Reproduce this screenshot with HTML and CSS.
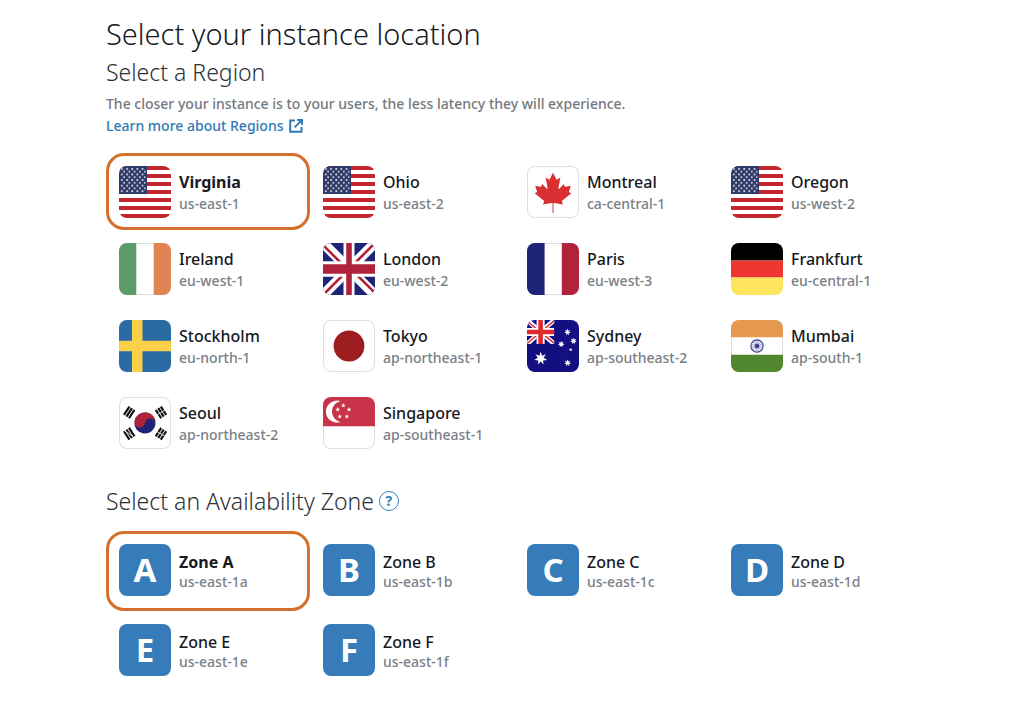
FILE: index.html
```html
<!DOCTYPE html>
<html lang="en">
<head>
<meta charset="utf-8">
<meta name="viewport" content="width=device-width, initial-scale=1">
<title>Select your instance location</title>
<link rel="stylesheet" href="styles.css">
</head>
<body>
<svg class="defs" aria-hidden="true">
  <defs>
    <pattern id="us-stars" width="5.2" height="5.6" patternUnits="userSpaceOnUse">
      <circle cx="2.8" cy="2.9" r=".95" fill="#f3f0e4"/>
      <circle cx="5.2" cy="5.6" r=".9" fill="#f3f0e4"/>
      <circle cx="0" cy="5.6" r=".9" fill="#f3f0e4"/>
      <circle cx="5.2" cy="0" r=".9" fill="#f3f0e4"/>
      <circle cx="0" cy="0" r=".9" fill="#f3f0e4"/>
    </pattern>
    <symbol id="flag-us" viewBox="0 0 52 52">
      <path fill="#fff" d="M0 0h52v52H0z"/>
      <path stroke="#c1272d" stroke-width="4" d="M0 2h52M0 10h52M0 18h52M0 26h52M0 34h52M0 42h52M0 50h52"/>
      <path fill="#2e3a69" d="M0 0h28v28H0z"/>
      <path fill="url(#us-stars)" d="M1.5 1.5h25v25h-25z"/>
    </symbol>
    <symbol id="star5" viewBox="-10 -10 20 20">
      <path d="M0-10 2.4-3.2 9.5-3.1 3.8 1.2 5.9 8.1 0 4-5.9 8.1-3.8 1.2-9.5-3.1-2.4-3.2z"/>
    </symbol>
    <symbol id="star7" viewBox="-10 -10 20 20">
      <path d="M0-10 2-4.1 7.8-6.2 4.4-1 9.7 2.2 3.5 2.8 4.3 9 0 4.5-4.3 9-3.5 2.8-9.7 2.2-4.4-1-7.8-6.2-2-4.1z"/>
    </symbol>
    <g id="trigram" stroke="#111" stroke-width="2.2">
      <path d="M-5-3h10M-5 0h10M-5 3h10"/>
    </g>
  </defs>
</svg>

<main class="page">
  <h1 class="title">Select your instance location</h1>

  <section>
    <h2 class="heading" id="region-heading">Select a Region</h2>
    <p class="intro">The closer your instance is to your users, the less latency they will experience.</p>
    <a class="learn" href="#regions">Learn more about Regions
      <svg class="external" viewBox="0 0 14 14" aria-hidden="true"><path d="M6 1.5H1.2v11.3h11.3V8M8.2 1H13v4.8M12.6 1.4 5.6 8.4"/></svg>
    </a>

    <div class="grid regions" id="regions" role="radiogroup" aria-labelledby="region-heading">
      <label class="card">
        <input class="radio" type="radio" name="region" value="us-east-1" checked>
        <svg class="tile" viewBox="0 0 52 52" aria-hidden="true"><use href="#flag-us"/></svg>
        <span class="text"><span class="name">Virginia</span><span class="code">us-east-1</span></span>
      </label>
      <label class="card">
        <input class="radio" type="radio" name="region" value="us-east-2">
        <svg class="tile" viewBox="0 0 52 52" aria-hidden="true"><use href="#flag-us"/></svg>
        <span class="text"><span class="name">Ohio</span><span class="code">us-east-2</span></span>
      </label>
      <label class="card">
        <input class="radio" type="radio" name="region" value="ca-central-1">
        <svg class="tile outlined" viewBox="0 0 52 52" aria-hidden="true">
          <path fill="#da2f32" transform="translate(26 26.5) scale(.0099)" d="m-50 2080 5-913a95 95 0 0 0-111-98l-859 151 116-320a65 65 0 0 0-20-73l-941-762 212-99a65 65 0 0 0 34-79l-186-572 542 115a65 65 0 0 0 73-38l105-247 423 454a65 65 0 0 0 111-57l-204-1052 327 189a65 65 0 0 0 91-27l332-652 332 652a65 65 0 0 0 91 27l327-189-204 1052a65 65 0 0 0 111 57l423-454 105 247a65 65 0 0 0 73 38l542-115-186 572a65 65 0 0 0 34 79l212 99-941 762a65 65 0 0 0-20 73l116 320-859-151a95 95 0 0 0-111 98l5 913z"/>
        </svg>
        <span class="text"><span class="name">Montreal</span><span class="code">ca-central-1</span></span>
      </label>
      <label class="card">
        <input class="radio" type="radio" name="region" value="us-west-2">
        <svg class="tile" viewBox="0 0 52 52" aria-hidden="true"><use href="#flag-us"/></svg>
        <span class="text"><span class="name">Oregon</span><span class="code">us-west-2</span></span>
      </label>
      <label class="card">
        <input class="radio" type="radio" name="region" value="eu-west-1">
        <svg class="tile outlined" viewBox="0 0 52 52" aria-hidden="true">
          <path fill="#5b9a69" d="M0 0h17.3v52H0z"/><path fill="#df8452" d="M34.7 0H52v52H34.7z"/>
        </svg>
        <span class="text"><span class="name">Ireland</span><span class="code">eu-west-1</span></span>
      </label>
      <label class="card">
        <input class="radio" type="radio" name="region" value="eu-west-2">
        <svg class="tile" viewBox="0 0 52 52" aria-hidden="true">
          <path fill="#1e2578" d="M0 0h52v52H0z"/>
          <path stroke="#fff" stroke-width="10" d="m-2-2 56 56M54-2-2 54"/>
          <path stroke="#b0233a" stroke-width="2.6" d="m-2 0 24 24M54-2 30 22M-2 54l24-24M54 52 30 28"/>
          <path fill="#fff" d="M20.5 0h11v52h-11zM0 18.2h52v15.6H0z"/>
          <path fill="#b0233a" d="M23.2 0h5.6v52h-5.6zM0 21.3h52v9.4H0z"/>
        </svg>
        <span class="text"><span class="name">London</span><span class="code">eu-west-2</span></span>
      </label>
      <label class="card">
        <input class="radio" type="radio" name="region" value="eu-west-3">
        <svg class="tile outlined" viewBox="0 0 52 52" aria-hidden="true">
          <path fill="#1e2578" d="M0 0h17.6v52H0z"/><path fill="#b0233a" d="M34.8 0H52v52H34.8z"/>
        </svg>
        <span class="text"><span class="name">Paris</span><span class="code">eu-west-3</span></span>
      </label>
      <label class="card">
        <input class="radio" type="radio" name="region" value="eu-central-1">
        <svg class="tile" viewBox="0 0 52 52" aria-hidden="true">
          <path d="M0 0h52v17.4H0z"/><path fill="#ee3632" d="M0 17.4h52v17.2H0z"/><path fill="#fde65d" d="M0 34.6h52V52H0z"/>
        </svg>
        <span class="text"><span class="name">Frankfurt</span><span class="code">eu-central-1</span></span>
      </label>
      <label class="card">
        <input class="radio" type="radio" name="region" value="eu-north-1">
        <svg class="tile" viewBox="0 0 52 52" aria-hidden="true">
          <path fill="#2a6ba5" d="M0 0h52v52H0z"/><path fill="#f9d048" d="M13 0h10.5v52H13zM0 20.8h52v10.4H0z"/>
        </svg>
        <span class="text"><span class="name">Stockholm</span><span class="code">eu-north-1</span></span>
      </label>
      <label class="card">
        <input class="radio" type="radio" name="region" value="ap-northeast-1">
        <svg class="tile outlined" viewBox="0 0 52 52" aria-hidden="true"><circle cx="26" cy="26" r="15.4" fill="#9d1c20"/></svg>
        <span class="text"><span class="name">Tokyo</span><span class="code">ap-northeast-1</span></span>
      </label>
      <label class="card">
        <input class="radio" type="radio" name="region" value="ap-southeast-2">
        <svg class="tile" viewBox="0 0 52 52" aria-hidden="true">
          <path fill="#140f80" d="M0 0h52v52H0z"/>
          <svg width="27.3" height="24" viewBox="0 0 27.3 24">
            <path stroke="#fff" stroke-width="4.6" d="m0 0 27.3 24M27.3 0 0 24"/>
            <path stroke="#d9303a" stroke-width="1.4" d="m0 1 27.3 22.4M27.3.6 0 23.4"/>
            <path fill="#fff" d="M9.6 0h8v24h-8zM0 8h27.3v8H0z"/>
            <path fill="#e0282f" d="M11.3 0h4.6v24h-4.6zM0 9.7h27.3v4.6H0z"/>
          </svg>
          <g fill="#fff">
            <use href="#star7" x="7" y="31.8" width="13.4" height="13.4"/>
            <use href="#star7" x="37" y="8.6" width="7" height="7"/>
            <use href="#star7" x="30.7" y="20.7" width="7" height="7"/>
            <use href="#star7" x="43" y="17.5" width="7" height="7"/>
            <use href="#star7" x="41.8" y="27.8" width="3.8" height="3.8"/>
            <use href="#star7" x="37" y="39.3" width="7.2" height="7.2"/>
          </g>
        </svg>
        <span class="text"><span class="name">Sydney</span><span class="code">ap-southeast-2</span></span>
      </label>
      <label class="card">
        <input class="radio" type="radio" name="region" value="ap-south-1">
        <svg class="tile outlined" viewBox="0 0 52 52" aria-hidden="true">
          <path fill="#e59850" d="M0 0h52v17.3H0z"/><path fill="#50872f" d="M0 34.7h52V52H0z"/>
          <g fill="none" stroke="#3b3b98">
            <circle cx="26" cy="26" r="6.1" stroke-width="1.1"/>
            <path stroke-width=".4" d="M20 26h12M26 20v12M21.8 21.8l8.4 8.4M30.2 21.8l-8.4 8.4M23.7 20.5l4.6 11M28.3 20.5l-4.6 11M20.5 23.7l11 4.6M20.5 28.3l11-4.6"/>
            <circle cx="26" cy="26" r="1.8" fill="#3b3b98"/>
          </g>
        </svg>
        <span class="text"><span class="name">Mumbai</span><span class="code">ap-south-1</span></span>
      </label>
      <label class="card">
        <input class="radio" type="radio" name="region" value="ap-northeast-2">
        <svg class="tile outlined" viewBox="0 0 52 52" aria-hidden="true">
          <g transform="rotate(8 26 26)">
            <circle cx="26" cy="26" r="10.6" fill="#1e2578"/>
            <path fill="#b0233a" d="M15.4 26a10.6 10.6 0 0 1 21.2 0 5.3 5.3 0 0 0-10.6 0 5.3 5.3 0 0 1-10.6 0z"/>
          </g>
          <use href="#trigram" transform="translate(10.2 15.4) rotate(-57)"/>
          <use href="#trigram" transform="translate(42 15.4) rotate(57)"/>
          <use href="#trigram" transform="translate(10.2 36.8) rotate(57)"/>
          <use href="#trigram" transform="translate(42 36.8) rotate(-57)"/>
          <path stroke="#fff" stroke-width=".8" d="m38 18 8-5M6 34l8 5.4M38 34.6l8 4.6"/>
        </svg>
        <span class="text"><span class="name">Seoul</span><span class="code">ap-northeast-2</span></span>
      </label>
      <label class="card">
        <input class="radio" type="radio" name="region" value="ap-southeast-1">
        <svg class="tile outlined" viewBox="0 0 52 52" aria-hidden="true">
          <path fill="#c83349" d="M0 0h52v29.3H0z"/>
          <path fill="#fff" d="M17.5 4.2a11 11 0 1 0 0 20.8 10.6 10.6 0 0 1 0-20.8z"/>
          <g fill="#fff">
            <use href="#star5" x="17.8" y="6" width="5" height="5"/>
            <use href="#star5" x="12.2" y="10.1" width="5" height="5"/>
            <use href="#star5" x="23.5" y="10.1" width="5" height="5"/>
            <use href="#star5" x="14.3" y="17" width="5" height="5"/>
            <use href="#star5" x="21.3" y="17" width="5" height="5"/>
          </g>
        </svg>
        <span class="text"><span class="name">Singapore</span><span class="code">ap-southeast-1</span></span>
      </label>
    </div>
  </section>

  <section>
    <div class="heading-row">
      <h2 class="heading" id="zone-heading">Select an Availability Zone</h2>
      <button class="help" type="button" aria-label="Help with Availability Zones">?</button>
    </div>

    <div class="grid zones" role="radiogroup" aria-labelledby="zone-heading">
      <label class="card">
        <input class="radio" type="radio" name="zone" value="us-east-1a" checked>
        <span class="tile letter" aria-hidden="true">A</span>
        <span class="text"><span class="name">Zone A</span><span class="code">us-east-1a</span></span>
      </label>
      <label class="card">
        <input class="radio" type="radio" name="zone" value="us-east-1b">
        <span class="tile letter" aria-hidden="true">B</span>
        <span class="text"><span class="name">Zone B</span><span class="code">us-east-1b</span></span>
      </label>
      <label class="card">
        <input class="radio" type="radio" name="zone" value="us-east-1c">
        <span class="tile letter" aria-hidden="true">C</span>
        <span class="text"><span class="name">Zone C</span><span class="code">us-east-1c</span></span>
      </label>
      <label class="card">
        <input class="radio" type="radio" name="zone" value="us-east-1d">
        <span class="tile letter" aria-hidden="true">D</span>
        <span class="text"><span class="name">Zone D</span><span class="code">us-east-1d</span></span>
      </label>
      <label class="card">
        <input class="radio" type="radio" name="zone" value="us-east-1e">
        <span class="tile letter" aria-hidden="true">E</span>
        <span class="text"><span class="name">Zone E</span><span class="code">us-east-1e</span></span>
      </label>
      <label class="card">
        <input class="radio" type="radio" name="zone" value="us-east-1f">
        <span class="tile letter" aria-hidden="true">F</span>
        <span class="text"><span class="name">Zone F</span><span class="code">us-east-1f</span></span>
      </label>
    </div>
  </section>
</main>
</body>
</html>
```
FILE: styles.css
```css
* {
  box-sizing: border-box;
}

body {
  margin: 0;
  background: #fff;
  color: #16191f;
  font-family: "Noto Sans", "Open Sans", sans-serif;
  font-weight: 500;
}

.defs {
  position: absolute;
  width: 0;
  height: 0;
}

.page {
  padding: 12px 102px 24px 106px;
}

.title,
.heading {
  margin: 0;
  font-weight: 300;
}

.title {
  font-size: 29px;
  line-height: 44px;
}

.heading {
  color: #2b3038;
  font-size: 23px;
  line-height: 32px;
}

.intro {
  margin: 6px 0 0;
  color: #737980;
  font-size: 14px;
  line-height: 20px;
}

.learn {
  display: inline-flex;
  align-items: center;
  gap: 5px;
  color: #2e7ab8;
  font-size: 14px;
  line-height: 24px;
  text-decoration: none;
}

.external {
  width: 14px;
  height: 14px;
  fill: none;
  stroke: currentColor;
  stroke-width: 2;
}

.grid {
  display: grid;
  grid-template-columns: repeat(4, minmax(0, 1fr));
}

.regions {
  margin-top: 15px;
  grid-auto-rows: 77px;
}

.zones {
  margin-top: 14px;
  grid-auto-rows: 80px;
}

.card {
  position: relative;
  display: flex;
  align-items: flex-start;
  gap: 8px;
  padding: 10px;
  border: 3px solid transparent;
  border-radius: 18px;
  cursor: pointer;
}

.regions .card {
  padding-bottom: 9px;
}

.card:has(:checked) {
  border-color: #d5702c;
}

.card:has(:checked) .name {
  font-weight: 700;
}

.radio {
  position: absolute;
  margin: 0;
  opacity: 0;
}

.tile {
  flex: none;
  width: 52px;
  height: 52px;
  border-radius: 8px;
}

.outlined {
  box-shadow: inset 0 0 0 1px #dfdfdf;
}

.letter {
  display: grid;
  place-items: center;
  background: #357cb8;
  color: #fff;
  font-size: 33px;
  font-weight: 700;
  line-height: 52px;
}

.text {
  display: flex;
  flex-direction: column;
  padding-top: 6px;
  font-size: 16px;
  line-height: 21px;
}

.zones .text {
  padding-top: 8px;
  line-height: 20px;
}

.code {
  color: #7a8087;
  font-size: 14px;
}

.heading-row {
  display: flex;
  align-items: center;
  gap: 5px;
  margin-top: 24px;
}

.help {
  width: 20px;
  height: 20px;
  padding: 0;
  border: 1px solid #2e83c2;
  border-radius: 50%;
  background: none;
  color: #2e83c2;
  font: 700 14px/18px "Noto Sans", "Open Sans", sans-serif;
}
```
